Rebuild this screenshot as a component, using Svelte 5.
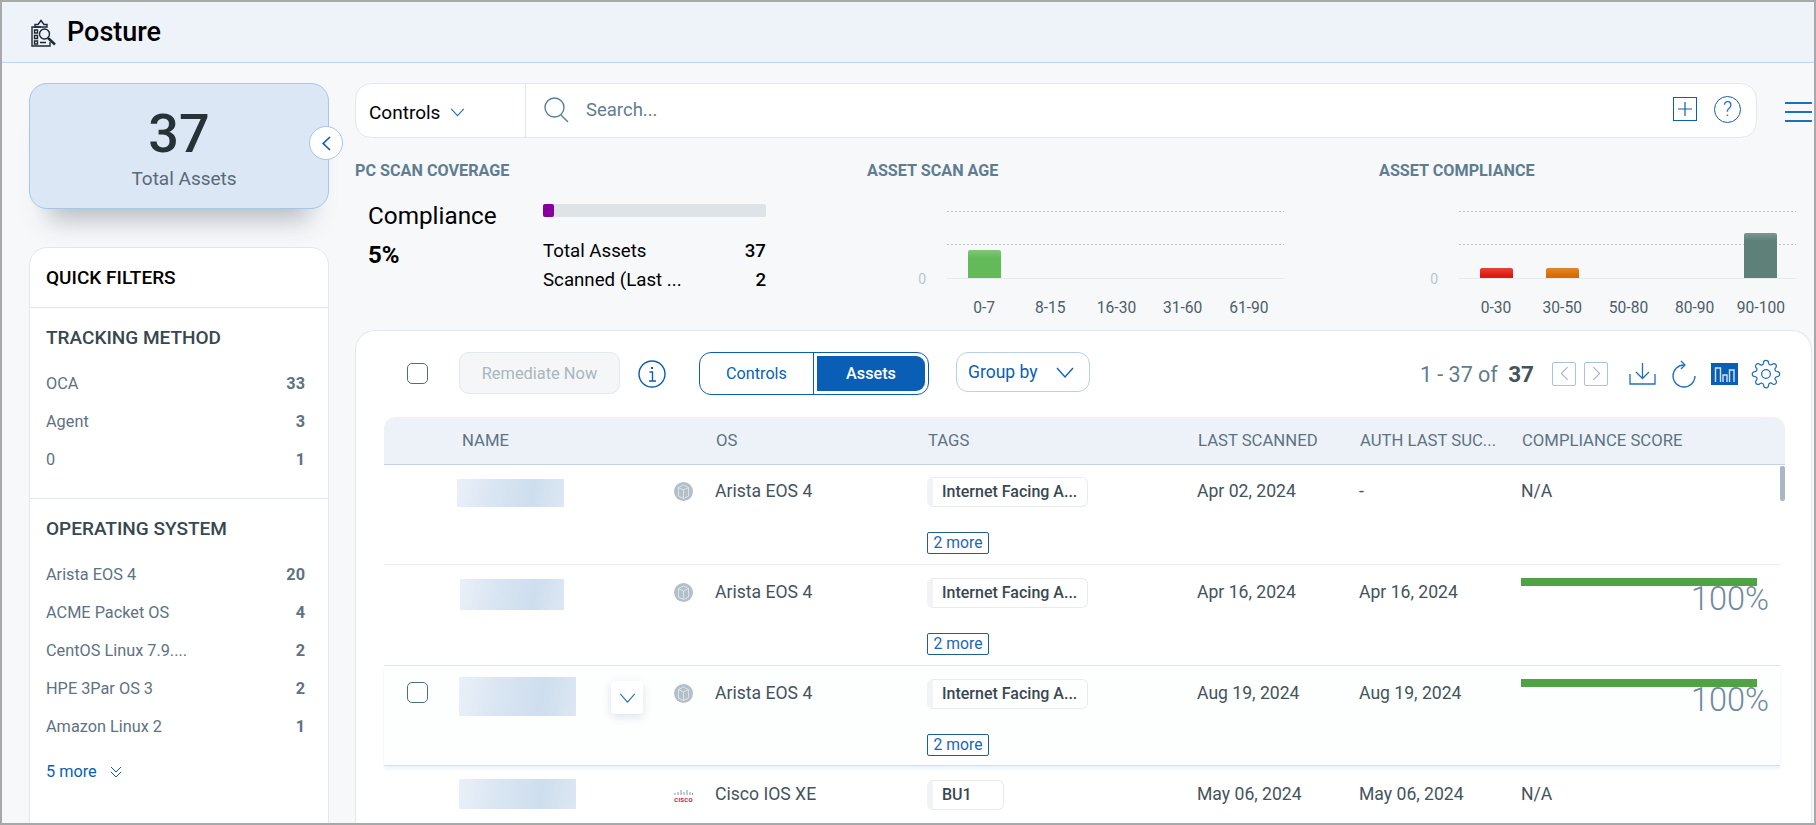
<script lang="ts">
    /** ---------- Sidebar data ---------- */
    const tracking = [
        { label: 'OCA', count: 33 },
        { label: 'Agent', count: 3 },
        { label: '0', count: 1 }
    ];
    const systems = [
        { label: 'Arista EOS 4', count: 20 },
        { label: 'ACME Packet OS', count: 4 },
        { label: 'CentOS Linux 7.9....', count: 2 },
        { label: 'HPE 3Par OS 3', count: 2 },
        { label: 'Amazon Linux 2', count: 1 }
    ];

    /** ---------- Charts (bar height in px) ---------- */
    const scanAge = [
        { label: '0-7', h: 28, color: '#62bb58' },
        { label: '8-15', h: 0, color: '' },
        { label: '16-30', h: 0, color: '' },
        { label: '31-60', h: 0, color: '' },
        { label: '61-90', h: 0, color: '' }
    ];
    const compliance = [
        { label: '0-30', h: 10, color: '#e0190d' },
        { label: '30-50', h: 10, color: '#d96c00' },
        { label: '50-80', h: 0, color: '' },
        { label: '80-90', h: 0, color: '' },
        { label: '90-100', h: 45, color: '#5e8079' }
    ];
    const charts = [
        { title: 'ASSET SCAN AGE', bars: scanAge },
        { title: 'ASSET COMPLIANCE', bars: compliance }
    ];

    /** ---------- Table rows. `blur` is the redacted asset name ---------- */
    const rows = [
        { blur: { x: 0, y: 2, w: 107, h: 28 }, os: 'Arista EOS 4', tag: 'Internet Facing A...', more: true, scanned: 'Apr 02, 2024', auth: '-', score: null },
        { blur: { x: 3, y: 1, w: 104, h: 31 }, os: 'Arista EOS 4', tag: 'Internet Facing A...', more: true, scanned: 'Apr 16, 2024', auth: 'Apr 16, 2024', score: 100 },
        { blur: { x: 2, y: -2, w: 117, h: 39 }, os: 'Arista EOS 4', tag: 'Internet Facing A...', more: true, scanned: 'Aug 19, 2024', auth: 'Aug 19, 2024', score: 100, active: true },
        { blur: { x: 2, y: -1, w: 117, h: 30 }, os: 'Cisco IOS XE', tag: 'BU1', more: false, scanned: 'May 06, 2024', auth: 'May 06, 2024', score: null, cisco: true }
    ];
</script>

<div class="frame">
    <header class="topbar">
        <svg class="posture-icon" viewBox="0 0 28 28" width="28" height="28" fill="none" stroke="#1c2733" stroke-width="1.4">
            <path d="M12 8 H3 V27 H21 V23"/>
            <path d="M6 5.5 H9 L12 1.5 L15 5.5 H18 V8 H6 Z"/>
            <path d="M5.5 11 h3 v3 h-3 z M5.5 16.5 h3 v3 h-3 z M5.5 22 h3 v3 h-3 z M11 23.5 h6"/>
            <circle cx="15.5" cy="15" r="5"/>
            <path d="M19 19 L26 25.5" stroke-width="2.4"/>
        </svg>
        <h1>Posture</h1>
    </header>

    <div class="layout">
        <aside class="sidebar">
            <div class="total">
                <strong>37</strong>
                <span>Total Assets</span>
                <button class="collapse" aria-label="Collapse">
                    <svg viewBox="0 0 9 15" width="9" height="15" fill="none" stroke="#0a5fb4" stroke-width="1.7"><path d="M8 1 L1.2 7.5 L8 14"/></svg>
                </button>
            </div>

            <section class="filters">
                <div class="filters-title">QUICK FILTERS</div>

                <div class="group first">
                    <h3>TRACKING METHOD</h3>
                    <ul>
                        {#each tracking as t}
                            <li><span>{t.label}</span><b>{t.count}</b></li>
                        {/each}
                    </ul>
                </div>

                <div class="group last">
                    <h3>OPERATING SYSTEM</h3>
                    <ul>
                        {#each systems as s}
                            <li><span>{s.label}</span><b>{s.count}</b></li>
                        {/each}
                    </ul>
                    <div class="show-more">
                        5 more
                        <svg viewBox="0 0 12 12" width="12" height="12" fill="none" stroke="#0a5fb4"><path d="M1 1 L6 6 L11 1 M1 6 L6 11 L11 6"/></svg>
                    </div>
                </div>
            </section>
        </aside>

        <main class="content">
            <div class="search-row">
                <div class="search">
                    <div class="scope">
                        Controls
                        <svg viewBox="0 0 16 10" width="15" height="9" fill="none" stroke="#1f6fbf" stroke-width="1.2"><path d="M1 1 L8 8.5 L15 1"/></svg>
                    </div>
                    <svg class="lens" viewBox="0 0 25 26" width="25" height="26" fill="none" stroke="#5a8096" stroke-width="1.4">
                        <circle cx="10.5" cy="10.5" r="9.5"/><path d="M17 18 L24 25"/>
                    </svg>
                    <span class="placeholder">Search...</span>
                    <div class="search-actions">
                        <span class="plus">
                            <svg viewBox="0 0 14 14" width="14" height="14" fill="none" stroke="#0a5fb4" stroke-width="1.2"><path d="M7 0 V14 M0 7 H14"/></svg>
                        </span>
                        <span class="help">?</span>
                    </div>
                </div>
                <div class="burger"><i></i><i></i><i></i></div>
            </div>

            <div class="stats">
                <div class="coverage">
                    <h4>PC SCAN COVERAGE</h4>
                    <div class="coverage-body">
                        <div class="coverage-left">
                            <div class="cov-label">Compliance</div>
                            <div class="cov-value">5%</div>
                        </div>
                        <div>
                            <div class="track"><div class="fill"></div></div>
                            <div class="cov-rows">
                                <div><span>Total Assets</span><b>37</b></div>
                                <div><span>Scanned (Last ...</span><b>2</b></div>
                            </div>
                        </div>
                    </div>
                </div>

                {#each charts as c}
                    <div class="chart">
                        <h4>{c.title}</h4>
                        <div class="chart-body">
                            <div class="zero">0</div>
                            <div class="plot">
                                {#each c.bars as b}
                                    <div class="slot">
                                        {#if b.h}
                                            <div class="bar" style="height: {b.h}px; background-color: {b.color}"></div>
                                        {/if}
                                    </div>
                                {/each}
                            </div>
                            <div class="labels">
                                {#each c.bars as b}
                                    <span>{b.label}</span>
                                {/each}
                            </div>
                        </div>
                    </div>
                {/each}
            </div>

            <section class="panel">
                <div class="toolbar">
                    <span class="check"></span>
                    <button class="remediate">Remediate Now</button>
                    <svg class="info" viewBox="0 0 28 28" width="28" height="28" fill="none" stroke="#0a5fb4" stroke-width="1.4">
                        <circle cx="14" cy="14" r="13"/>
                        <path d="M11.5 12 H14.5 V21 M11 21 H18"/>
                        <path d="M14 7 v2" stroke-width="2"/>
                    </svg>
                    <div class="toggle">
                        <span>Controls</span>
                        <span class="on"><em>Assets</em></span>
                    </div>
                    <div class="group-by">
                        Group by
                        <svg viewBox="0 0 18 11" width="18" height="11" fill="none" stroke="#0a5fb4" stroke-width="1.3"><path d="M1 1 L9 10 L17 1"/></svg>
                    </div>

                    <div class="pager">
                        <span class="range">1 - 37 of <b>37</b></span>
                        <span class="page-btn first-btn"><svg viewBox="0 0 10 16" width="9" height="15" fill="none" stroke="#a3b5c2" stroke-width="1.2"><path d="M8.5 1 L1.5 8 L8.5 15"/></svg></span>
                        <span class="page-btn"><svg viewBox="0 0 10 16" width="9" height="15" fill="none" stroke="#a3b5c2" stroke-width="1.2"><path d="M1.5 1 L8.5 8 L1.5 15"/></svg></span>
                        <svg class="tool dl" viewBox="0 0 27 22" width="27" height="22" fill="none" stroke="#1f6fbf" stroke-width="1.3">
                            <path d="M13.5 0 V15 M7 9 L13.5 15.5 L20 9"/>
                            <path d="M1 11 V21 H26 V11"/>
                        </svg>
                        <svg class="tool" viewBox="0 0 24 28" width="24" height="28" fill="none" stroke="#1f6fbf" stroke-width="1.3">
                            <path d="M12 5 A11 11 0 1 0 23 16"/>
                            <path d="M9 1 L13 5 L9 9"/>
                        </svg>
                        <svg class="tool chart-tool" viewBox="0 0 27 22" width="27" height="22">
                            <rect width="27" height="22" fill="#0a5eb5"/>
                            <path d="M4.5 19 V5 H9.5 V19 M12 19 V12 H16 V19 M18.5 19 V7 H23 V19" fill="none" stroke="#d4e3f3" stroke-width="1.4"/>
                        </svg>
                        <svg class="tool gear" viewBox="0 0 24 24" width="30" height="30" fill="none" stroke="#1f6fbf" stroke-width="1">
                            <circle cx="12" cy="12" r="3.5"/>
                            <path d="M19.4 15a1.65 1.65 0 0 0 .33 1.82l.06.06a2 2 0 0 1 0 2.83 2 2 0 0 1-2.83 0l-.06-.06a1.65 1.65 0 0 0-1.82-.33 1.65 1.65 0 0 0-1 1.51V21a2 2 0 0 1-2 2 2 2 0 0 1-2-2v-.09A1.65 1.65 0 0 0 9 19.4a1.65 1.65 0 0 0-1.82.33l-.06.06a2 2 0 0 1-2.83 0 2 2 0 0 1 0-2.83l.06-.06a1.65 1.65 0 0 0 .33-1.82 1.65 1.65 0 0 0-1.51-1H3a2 2 0 0 1-2-2 2 2 0 0 1 2-2h.09A1.65 1.65 0 0 0 4.6 9a1.65 1.65 0 0 0-.33-1.82l-.06-.06a2 2 0 0 1 0-2.83 2 2 0 0 1 2.83 0l.06.06a1.65 1.65 0 0 0 1.82.33H9a1.65 1.65 0 0 0 1-1.51V3a2 2 0 0 1 2-2 2 2 0 0 1 2 2v.09a1.65 1.65 0 0 0 1 1.51 1.65 1.65 0 0 0 1.82-.33l.06-.06a2 2 0 0 1 2.83 0 2 2 0 0 1 0 2.83l-.06.06a1.65 1.65 0 0 0-.33 1.82V9a1.65 1.65 0 0 0 1.51 1H21a2 2 0 0 1 2 2 2 2 0 0 1-2 2h-.09a1.65 1.65 0 0 0-1.51 1z"/>
                        </svg>
                    </div>
                </div>

                <div class="thead">
                    <span></span>
                    <span class="th-name">NAME</span>
                    <span></span>
                    <span>OS</span>
                    <span>TAGS</span>
                    <span>LAST SCANNED</span>
                    <span>AUTH LAST SUC...</span>
                    <span>COMPLIANCE SCORE</span>
                </div>

                <div class="tbody">
                    <div class="thumb"></div>
                    {#each rows as r}
                        <div class="row" class:active={r.active}>
                            <div>{#if r.active}<span class="check row-check"></span>{/if}</div>
                            <div>
                                <div class="blur" style="margin-left: {r.blur.x}px; margin-top: {r.blur.y}px; width: {r.blur.w}px; height: {r.blur.h}px"></div>
                            </div>
                            <div class="os-icon">
                                {#if r.cisco}
                                    <div class="cisco">
                                        <svg viewBox="0 0 19 7" width="19" height="7" stroke="#7d9bb0" stroke-width="1"><path d="M1 4 V6 M4 3 V6 M7 1 V6 M10 3 V6 M13 1 V6 M16 3 V6 M18.5 4 V6"/></svg>
                                        <span>CISCO</span>
                                    </div>
                                {:else}
                                    <svg viewBox="0 0 19 19" width="19" height="19">
                                        <circle cx="9.5" cy="9.5" r="9.5" fill="#b3c0c8"/>
                                        <path d="M4.5 5.5 L9.5 3 L14.5 5.5 V14 L9.5 16.5 L4.5 14 Z M4.5 5.5 L9.5 8 L14.5 5.5 M9.5 8 V16.5" fill="none" stroke="#e4eaee" stroke-width="0.8"/>
                                    </svg>
                                {/if}
                            </div>
                            <div class="cell">{r.os}</div>
                            <div class="tags">
                                <span class="chip" class:short={r.tag === 'BU1'}>{r.tag}</span>
                                {#if r.more}<span class="more-tag">2 more</span>{/if}
                            </div>
                            <div class="cell">{r.scanned}</div>
                            <div class="cell">{r.auth}</div>
                            <div class="score">
                                {#if r.score === null}
                                    <div class="cell">N/A</div>
                                {:else}
                                    <div class="score-bar" style="width: {r.score * 2.36}px"></div>
                                    <div class="score-pct">{r.score}%</div>
                                {/if}
                            </div>
                            {#if r.active}
                                <button class="expand" aria-label="Expand">
                                    <svg viewBox="0 0 18 11" width="17" height="10" fill="none" stroke="#1f6fbf" stroke-width="1.2"><path d="M1 1 L9 10 L17 1"/></svg>
                                </button>
                            {/if}
                        </div>
                    {/each}
                </div>
            </section>
        </main>
    </div>
</div>

<style>
    :global(body) { margin: 0; overflow: hidden; }

    .frame {
        box-sizing: border-box;
        height: 825px;
        border: 2px solid #a6a8aa;
        background: #f6f8fa;
        overflow: hidden;
        font-family: Roboto, "Liberation Sans", sans-serif;
        color: #000;
    }

    /* ---------- Top bar ---------- */
    .topbar {
        height: 60px;
        display: flex;
        align-items: center;
        background: #eef3fa;
        border-bottom: 1px solid #bcd6ee;
        padding-left: 27px;
    }
    .posture-icon { margin-right: 10px; margin-top: 1px; }
    h1 { margin: 0; font-size: 27px; font-weight: 500; }

    .layout { display: flex; align-items: flex-start; }

    /* ---------- Sidebar ---------- */
    .sidebar {
        width: 300px;
        flex: none;
        margin: 20px 26px 0 27px;
    }
    .total {
        position: relative;
        box-sizing: border-box;
        height: 126px;
        background: #dbe7f4;
        border: 1px solid #a8c6e6;
        border-radius: 18px;
        display: flex;
        flex-direction: column;
        align-items: center;
        box-shadow: 0 30px 24px -20px rgba(60, 70, 80, 0.35);
        margin-bottom: 38px;
    }
    .total strong {
        font-size: 54px;
        font-weight: 500;
        line-height: 60px;
        color: #263238;
        margin-top: 20px;
    }
    .total span { font-size: 19px; line-height: 24px; color: #5a6a75; margin: 3px 0 0 10px; }
    .collapse {
        position: absolute;
        right: -15px;
        top: 42px;
        width: 34px;
        height: 34px;
        border-radius: 50%;
        background: #fff;
        border: 1px solid #a8c6e6;
        padding: 0;
        display: flex;
        align-items: center;
        justify-content: center;
    }

    .filters {
        background: #fff;
        border: 1px solid #e3e8ee;
        border-radius: 18px;
        height: 700px;
    }
    .filters-title {
        height: 59px;
        line-height: 60px;
        padding-left: 16px;
        font-size: 19px;
        font-weight: 500;
        border-bottom: 1px solid #e3e8ee;
    }
    .group { padding: 18px 17px 19px 16px; border-bottom: 1px solid #e3e8ee; }
    .group.last { border-bottom: 0; padding-top: 18px; }
    .group h3 { margin: 0 0 15px; font-size: 19px; line-height: 24px; font-weight: 500; color: #37474f; }
    .group ul { list-style: none; margin: 0; padding: 0 6px 0 0; }
    .group li {
        display: flex;
        justify-content: space-between;
        line-height: 38px;
        font-size: 16.3px;
        color: #5e7282;
    }
    .group li b { font-weight: 700; }
    .show-more {
        margin-top: 14px;
        line-height: 24px;
        font-size: 16.3px;
        color: #0a5fb4;
        display: flex;
        align-items: center;
        gap: 13px;
    }

    /* ---------- Search row ---------- */
    .content { flex: 1; min-width: 0; margin-top: 20px; }
    .search-row { display: flex; align-items: center; justify-content: space-between; padding-right: 2px; }
    .search {
        box-sizing: border-box;
        width: 1402px;
        height: 55px;
        background: #fff;
        border: 1px solid #e3e8ee;
        border-radius: 16px;
        display: flex;
        align-items: center;
    }
    .scope {
        box-sizing: border-box;
        width: 170px;
        height: 100%;
        padding-left: 13px;
        border-right: 1px solid #e3e8ee;
        font-size: 19px;
        display: flex;
        align-items: center;
        gap: 10px;
        padding-top: 3px;
    }
    .lens { margin-left: 18px; margin-top: -2px; }
    .placeholder { margin-left: 17px; font-size: 18.5px; color: #5f7d8f; margin-top: -2px; }
    .search-actions { margin-left: auto; display: flex; align-items: center; gap: 17px; padding-right: 15px; margin-top: -3px; }
    .plus {
        box-sizing: border-box;
        width: 24px;
        height: 24px;
        border: 1.5px solid #0a5fb4;
        display: flex;
        align-items: center;
        justify-content: center;
    }
    .help {
        box-sizing: border-box;
        width: 27px;
        height: 27px;
        border: 1.5px solid #0a5fb4;
        border-radius: 50%;
        color: #0a5fb4;
        font-size: 20px;
        font-weight: 300;
        text-align: center;
        line-height: 24px;
    }
    .burger { width: 27px; display: flex; flex-direction: column; gap: 7px; margin-top: 2px; }
    .burger i { height: 2px; background: #1f6fbf; }

    /* ---------- Stats ---------- */
    .stats { display: grid; grid-template-columns: 512px 512px 1fr; margin-top: 23px; height: 169px; }
    h4 { margin: 0; font-size: 16.2px; line-height: 20px; font-weight: 700; color: #5f7d8f; }

    .coverage-body { display: grid; grid-template-columns: 188px 223px; }
    .coverage-left { padding-left: 13px; padding-top: 20px; }
    .cov-label { font-size: 24.3px; line-height: 30px; }
    .cov-value { font-size: 24px; line-height: 30px; font-weight: 700; margin-top: 9px; }
    .track { height: 13px; margin-top: 23px; background: #dde3e6; border-radius: 2px; }
    .fill { width: 11px; height: 13px; background: #85009c; border-radius: 2px; }
    .cov-rows { margin-top: 20px; }
    .cov-rows div { display: flex; justify-content: space-between; font-size: 18.7px; line-height: 29px; }
    .cov-rows b { font-weight: 500; }

    .chart-body {
        display: grid;
        grid-template-columns: 80px 337px;
        margin-top: 30px;
    }
    .zero {
        align-self: end;
        text-align: right;
        padding-right: 21px;
        font-size: 14px;
        line-height: 14px;
        margin-bottom: -7px;
        color: #b6c6cf;
    }
    /* dotted guide lines sit at the top and half way up the plot */
    .plot {
        box-sizing: border-box;
        height: 68px;
        padding: 0 2px 0 4px;
        display: grid;
        grid-template-columns: repeat(5, 1fr);
        border-bottom: 1px solid #e8ebee;
        background-image:
            repeating-linear-gradient(90deg, #bcc4c9 0 1.5px, transparent 1.5px 4px),
            repeating-linear-gradient(90deg, #bcc4c9 0 1.5px, transparent 1.5px 4px);
        background-size: 100% 1px;
        background-position: 0 0, 0 33px;
        background-repeat: no-repeat;
    }
    .slot { display: flex; align-items: flex-end; justify-content: center; }
    .bar {
        width: 33px;
        border-radius: 2px 2px 0 0;
        background-image: linear-gradient(rgba(255, 255, 255, 0.18), rgba(255, 255, 255, 0) 8px);
    }
    .labels {
        grid-column: 2;
        display: grid;
        grid-template-columns: repeat(5, 1fr);
        padding: 0 2px 0 4px;
        margin-top: 19px;
        text-align: center;
        font-size: 15.6px;
        line-height: 20px;
        color: #4d5e69;
    }

    /* ---------- Panel ---------- */
    .panel {
        box-sizing: border-box;
        height: 560px;
        margin: 0 2px 0 0;
        background: #fff;
        border: 1px solid #e3e8ee;
        border-bottom: 0;
        border-radius: 20px 20px 0 0;
        padding: 21px 26px 0 28px;
    }
    .toolbar { display: flex; align-items: center; height: 43px; margin-bottom: 22px; }
    .check {
        box-sizing: border-box;
        flex: none;
        display: block;
        width: 21px;
        height: 21px;
        border: 1.5px solid #4e6e7e;
        border-radius: 5px;
        background: #fff;
    }
    .toolbar > .check { margin-left: 23px; }
    .remediate {
        box-sizing: border-box;
        width: 161px;
        height: 42px;
        margin-left: 31px;
        align-self: flex-start;
        padding: 0;
        background: #f4f6f8;
        border: 1px solid #e3e8ec;
        border-radius: 10px;
        color: #a9b6be;
        font: 16.4px Roboto, sans-serif;
    }
    .info { margin-left: 18px; }
    .toggle {
        box-sizing: border-box;
        width: 230px;
        height: 43px;
        margin-left: 33px;
        border: 1.5px solid #0a5fb4;
        border-radius: 12px;
        display: grid;
        grid-template-columns: 113px 1fr;
        font-size: 16.2px;
        color: #0a5fb4;
    }
    .toggle > span { display: flex; align-items: center; justify-content: center; }
    .toggle .on { border-left: 1.5px solid #0a5fb4; padding: 3px; }
    .toggle em {
        font-style: normal;
        width: 100%;
        height: 100%;
        display: flex;
        align-items: center;
        justify-content: center;
        background: #0a5eb5;
        color: #fff;
        border-radius: 0 9px 9px 0;
        font-weight: 500;
    }
    .group-by {
        box-sizing: border-box;
        width: 134px;
        height: 40px;
        margin-left: 27px;
        align-self: flex-start;
        padding: 0 15px 0 11px;
        border: 1px solid #b9d0e8;
        border-radius: 12px;
        display: flex;
        align-items: center;
        justify-content: space-between;
        font-size: 17.5px;
        color: #0a5fb4;
    }
    .pager { margin-left: auto; margin-right: 4px; display: flex; align-items: center; color: #5f7d8f; }
    .range { font-size: 21.5px; margin-right: 18px; }
    .range b { color: #44535c; font-weight: 700; margin-left: 5px; font-size: 22.5px; }
    .page-btn {
        box-sizing: border-box;
        width: 24px;
        height: 24px;
        border: 1.5px solid #a9c4da;
        border-radius: 2px;
        display: flex;
        align-items: center;
        justify-content: center;
    }
    .first-btn { margin-right: 8px; }
    .tool { margin-left: 16px; }
    .tool.dl { margin-left: 21px; }
    .tool.chart-tool { margin-left: 15px; }
    .tool.gear { margin-left: 13px; }

    /* ---------- Table ---------- */
    .thead, .row {
        display: grid;
        grid-template-columns: 73px 217px 41px 212px 270px 162px 162px 1fr;
    }
    .thead {
        box-sizing: border-box;
        height: 48px;
        padding-right: 5px;
        align-items: center;
        background: #edf2f9;
        border-bottom: 1px solid #c5d3e3;
        border-radius: 12px 12px 0 0;
        font-size: 16.7px;
        color: #5f7282;
    }
    .thead span { padding-left: 1px; }
    .thead .th-name { padding-left: 5px; }

    .tbody { position: relative; padding-right: 5px; }
    .thumb {
        position: absolute;
        right: 0;
        top: 1px;
        width: 5px;
        height: 35px;
        background: #a9b7c4;
        border-radius: 2px;
    }
    .row {
        position: relative;
        box-sizing: border-box;
        height: 101px;
        padding-top: 13px;
        align-items: start;
        border-bottom: 1px solid #e8ecef;
    }
    .row:nth-child(2) { height: 100px; padding-top: 12px; }
    .row.active {
        height: 100px;
        background: #fdfefe;
        border-bottom: 1px solid #d3deea;
        box-shadow: 0 3px 3px rgba(200, 220, 240, 0.35);
    }
    .row:nth-child(3) { border-bottom-color: #dfe7ea; }
    .row:last-child { border-bottom: 0; padding-top: 14px; }

    .row-check { margin: 3px 0 0 23px; }
    .blur {
        background: linear-gradient(100deg, #eaf0f8 0%, #d9e5f2 35%, #cedeee 70%, #dce7f3 100%);
    }
    .os-icon { padding-top: 5px; height: 19px; }
    .cisco { display: flex; flex-direction: column; align-items: center; width: 19px; padding-top: 4px; }
    .cisco span { font-size: 6px; line-height: 7px; font-weight: 700; color: #c8102e; letter-spacing: 0.2px; }

    .cell { font-size: 17.6px; line-height: 28px; color: #44535c; }
    .tags { display: flex; flex-direction: column; align-items: flex-start; gap: 25px; }
    .chip {
        box-sizing: border-box;
        width: 161px;
        height: 30px;
        padding-left: 9px;
        line-height: 28px;
        border: 1px solid #e7ebee;
        border-left: 6px solid #f1f3f5;
        border-radius: 6px;
        font-size: 16px;
        font-weight: 500;
        color: #3a4750;
        white-space: nowrap;
    }
    .chip.short { width: 77px; }
    .more-tag {
        box-sizing: border-box;
        width: 62px;
        height: 22px;
        line-height: 20px;
        text-align: center;
        border: 1px solid #1e5f8f;
        border-radius: 2px;
        font-size: 15.7px;
        color: #1a66b8;
    }
    .score-bar { height: 8px; background: #4fa345; }
    .score-pct {
        width: 248px;
        text-align: right;
        font-size: 32.5px;
        font-weight: 300;
        line-height: 26px;
        color: #6f8ba0;
    }
    .expand {
        position: absolute;
        left: 227px;
        top: 15px;
        width: 32px;
        height: 33px;
        padding: 0;
        background: #fff;
        border: 0;
        border-radius: 4px;
        box-shadow: 0 3px 8px rgba(120, 150, 180, 0.25);
        display: flex;
        align-items: center;
        justify-content: center;
    }
</style>
